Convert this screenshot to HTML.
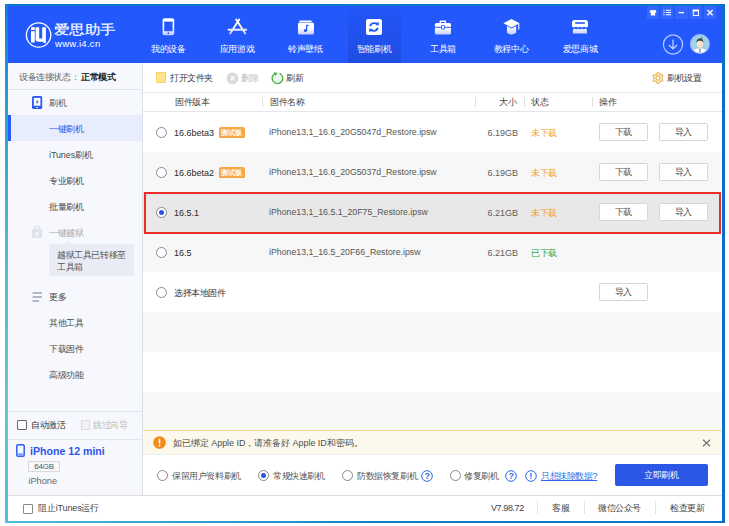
<!DOCTYPE html>
<html><head><meta charset="utf-8">
<style>
*{margin:0;padding:0;box-sizing:border-box}
html,body{width:729px;height:526px;background:#fff;overflow:hidden;font-family:"Liberation Sans",sans-serif;font-size:9px;color:#3a3a3a;letter-spacing:-0.4px}
.a{position:absolute}
.t{position:absolute;white-space:nowrap;line-height:12px;height:12px}
#frame{left:5px;top:4px;width:720px;height:519px}
#hdr{left:8px;top:6px;width:714px;height:57px;background:#2358fd}
.nav{position:absolute;top:43px;height:12px;line-height:12px;color:#fff;font-size:9px;white-space:nowrap;transform:translateX(-50%)}
.wb{position:absolute;top:6.2px;width:12.5px;height:12.5px;background:#3465ff}
#side{left:8px;top:63px;width:134px;height:432px;background:#f6f8fd}
.sline{position:absolute;height:1px;background:#e1e4ea}
.si{position:absolute;left:49px;line-height:12px;height:12px;white-space:nowrap;color:#4a4a4a}
.row{position:absolute;left:143px;width:578px;height:40px}
.radio{position:absolute;left:156px;width:11px;height:11px;border:1px solid #8a8a8a;border-radius:50%;background:#fff}
.ver{position:absolute;left:174px;line-height:12px;height:12px;color:#2a2a2a;font-size:9px;letter-spacing:0}
.fn{position:absolute;left:268.5px;line-height:12px;height:12px;color:#555;white-space:nowrap;font-size:9.7px;letter-spacing:0;transform:scaleX(0.905);transform-origin:0 0}
.sz{position:absolute;left:470px;width:48px;text-align:right;line-height:12px;height:12px;color:#5e5e5e;letter-spacing:0}
.st{position:absolute;left:531px;line-height:12px;height:12px;color:#f0a11a}
.btn{position:absolute;height:18px;width:48.5px;border:1px solid #d6d6d6;border-radius:1.5px;background:#fff;text-align:center;line-height:16px;color:#505050}
.badge{position:absolute;height:10.7px;width:26.5px;background:#f5a945;color:#fff;font-size:7px;line-height:12.4px;letter-spacing:0;font-weight:700;overflow:hidden;text-align:center;border-radius:1.5px}
.th{position:absolute;top:96px;line-height:12px;height:12px;color:#444}
.vd{position:absolute;top:97px;width:1px;height:10px;background:#e0e0e0}
</style></head><body>
<!-- frame border -->
<div class="a" style="left:5px;top:4px;width:720px;height:2px;background:#0b77c9"></div>
<div class="a" style="left:5px;top:4px;width:3px;height:519px;background:linear-gradient(#0f7fcc,#1a88d0 6%,#2aa0d0 20%,#5ab5d5 47%,#6cc3d8 77%,#50bedc 100%)"></div>
<div class="a" style="left:722px;top:4px;width:3px;height:519px;background:#0a6fcc"></div>
<div class="a" style="left:5px;top:521px;width:720px;height:2px;background:linear-gradient(90deg,#50bedc,#38acd6 15%,#1d94cc 40%,#0a80c2 52%,#0a72cc)"></div>

<!-- header -->
<div id="hdr" class="a"></div>
<div class="a" style="left:348px;top:6px;width:53px;height:57px;background:linear-gradient(#2356f8,#1f4de2)"></div>
<!-- logo -->
<svg class="a" style="left:0;top:0" width="729" height="70" viewBox="0 0 729 70">
 <defs>
  <linearGradient id="g" x1="0" y1="0" x2="0" y2="1"><stop offset="0" stop-color="#fff"/><stop offset=".45" stop-color="#fff"/><stop offset="1" stop-color="#c5cdf8"/></linearGradient>
  <linearGradient id="gs" gradientUnits="userSpaceOnUse" x1="0" y1="19" x2="0" y2="35"><stop offset="0" stop-color="#fff"/><stop offset=".45" stop-color="#fff"/><stop offset="1" stop-color="#c5cdf8"/></linearGradient>
 </defs>
 <circle cx="38.6" cy="35" r="12.2" fill="none" stroke="#fff" stroke-width="1.3"/>
 <path d="M31 27.2 H34.8 V30 H31 Z" fill="#fff"/>
 <path d="M31 31.2 H34.8 V42.5 H31 Z" fill="#fff"/>
 <path d="M35.6 27.2 H39.2 V38.5 H42.2 V27.2 H45.9 V43 H43.5 V41.8 H38.4 C36.6 41.8 35.6 40.6 35.6 39 Z" fill="#fff"/>
 <!-- phone -->
 <rect x="162.6" y="18.3" width="11.6" height="17" rx="2" fill="url(#g)"/>
 <rect x="164.2" y="21.6" width="8.4" height="9.6" fill="#2358fd"/>
 <circle cx="168.4" cy="33.2" r="0.9" fill="#2358fd"/>
 <!-- app store -->
 <path d="M239.2 19.6 L230.2 33.6 M236.2 19.6 L245.2 33.6 M228.6 29.8 H246.2" stroke="url(#gs)" stroke-width="1.9" fill="none" stroke-linecap="round"/>
 <!-- music -->
 <rect x="299.2" y="20.4" width="12.6" height="1.6" rx=".8" fill="#fff"/>
 <rect x="298" y="22.6" width="16" height="12" rx="1.6" fill="url(#g)"/>
 <path d="M306.6 25 V30.6 M306.6 25 L308.6 25.8" stroke="#2358fd" stroke-width="1.2" fill="none"/>
 <circle cx="305.4" cy="30.6" r="1.5" fill="#2358fd"/>
 <!-- tools -->
 <path d="M440.3 23.5 V21.2 H445.3 V23.5" stroke="#fff" stroke-width="1.4" fill="none"/>
 <rect x="434.9" y="23" width="16.1" height="11.6" rx="1.6" fill="url(#g)"/>
 <rect x="434.9" y="26.8" width="16.1" height="1" fill="#2358fd"/>
 <rect x="441.6" y="25.6" width="2.8" height="3.4" fill="#fff" stroke="#2358fd" stroke-width="0.8"/>
 <!-- cap -->
 <path d="M511.5 18.9 L519.6 23.2 L511.5 27.6 L503.4 23.2 Z" fill="#fff"/>
 <path d="M507 26 V32.6 C508.5 35 514.5 35 516.2 32.6 V26 L511.5 28.6 Z" fill="url(#gs)"/>
 <path d="M518.8 23.6 V29.6" stroke="#fff" stroke-width="1.1"/>
 <!-- shop -->
 <path d="M574.5 19.9 H585.5 C587 19.9 588 21 588 22.5 V26.2 C587 27.8 585.2 27.8 584 26.6 C583 27.8 581 27.8 580 26.6 C579 27.8 577 27.8 576 26.6 C574.8 27.8 573 27.8 572 26.2 V22.5 C572 21 573 19.9 574.5 19.9 Z" fill="#fff"/>
 <rect x="575.2" y="22.2" width="9.6" height="1.6" fill="#2358fd"/>
 <path d="M572.9 29.3 C574 28.4 575.6 28.4 576.5 29.3 C577.5 28.4 579 28.4 580 29.3 C581 28.4 582.5 28.4 583.5 29.3 C584.5 28.4 586 28.4 586.9 29.3 V33.4 H572.9 Z" fill="url(#gs)"/>
</svg>
<div class="t" style="left:54px;top:21.5px;font-size:15.5px;line-height:16px;height:16px;color:#fff;font-weight:400;-webkit-text-stroke:0.2px #fff;letter-spacing:-0.6px;transform:scaleY(0.84);transform-origin:0 50%">爱思助手</div>
<div class="t" style="left:55px;top:38px;font-size:9.5px;line-height:11px;height:11px;color:#fff;letter-spacing:0.3px">www.i4.cn</div>

<!-- nav active bg -->


<!-- nav icons -->
<svg class="a" style="left:366px;top:19px" width="16" height="16" viewBox="0 0 16 16"><rect x="0" y="0" width="16" height="16" rx="2" fill="#fff"/><path d="M4.2 7.2 A4 4 0 0 1 11.5 6 M11.8 8.8 A4 4 0 0 1 4.5 10" stroke="#2358fd" stroke-width="1.8" fill="none"/><path d="M9.6 4 L12.6 6.9 L12.9 3.2 Z M6.4 12 L3.4 9.1 L3.1 12.8 Z" fill="#2358fd"/></svg>
<div class="nav" style="left:168.5px">我的设备</div>
<div class="nav" style="left:237px">应用游戏</div>
<div class="nav" style="left:305.5px">铃声壁纸</div>
<div class="nav" style="left:374px">智能刷机</div>
<div class="nav" style="left:443px">工具箱</div>
<div class="nav" style="left:511px">教程中心</div>
<div class="nav" style="left:580px">爱思商城</div>

<!-- window buttons -->
<div class="wb" style="left:646.5px"></div>
<div class="wb" style="left:660.8px"></div>
<div class="wb" style="left:675.1px"></div>
<div class="wb" style="left:689.4px"></div>
<div class="wb" style="left:703.7px"></div>
<svg class="a" style="left:0;top:0" width="729" height="24" viewBox="0 0 729 24">
 <path d="M650 10.6 L652 9.8 C652.4 10.6 653.6 10.6 654 9.8 L656 10.6 L656.3 12.4 L655.2 12.6 V15.4 H650.8 V12.6 L649.7 12.4 Z" fill="#fff"/>
 <path d="M663.4 10.2 H664.6 M663.4 12.5 H664.6 M663.4 14.8 H664.6 M665.8 10.2 H671 M665.8 12.5 H671 M665.8 14.8 H671" stroke="#fff" stroke-width="1.1"/>
 <path d="M678.6 12.6 H684" stroke="#fff" stroke-width="1.3"/>
 <rect x="693.3" y="10.2" width="5.2" height="5.2" fill="none" stroke="#fff" stroke-width="1"/><rect x="692.8" y="9.7" width="6.2" height="1.8" fill="#fff"/>
 <path d="M707.4 10 L712.6 15.2 M712.6 10 L707.4 15.2" stroke="#fff" stroke-width="1.4"/>
</svg>
<!-- download circle -->
<svg class="a" style="left:662px;top:34px" width="22" height="22" viewBox="0 0 22 22"><circle cx="11" cy="10.5" r="9.6" fill="none" stroke="#b9c8ff" stroke-width="1.2"/><path d="M11 5.5 V15 M7 11 L11 15 L15 11" stroke="#c9d6ff" stroke-width="1.2" fill="none"/></svg>
<!-- avatar -->
<svg class="a" style="left:0;top:0" width="729" height="63" viewBox="0 0 729 63">
 <defs><clipPath id="av"><circle cx="699.9" cy="44" r="8.8"/></clipPath></defs>
 <circle cx="699.9" cy="44" r="10" fill="#aab8ff"/>
 <circle cx="699.9" cy="44" r="8.8" fill="#9fd3e6"/>
 <g clip-path="url(#av)">
  <path d="M692 54 C692.5 49.5 695.5 48.5 699.9 48.5 C704.3 48.5 707.3 49.5 707.8 54 Z" fill="#fff"/>
  <path d="M699 48.6 H700.8 L700.4 53 H699.4 Z" fill="#5a9ad8"/>
  <rect x="698.6" y="46.5" width="2.6" height="2.4" fill="#f5d3b8"/>
  <ellipse cx="699.9" cy="43.8" rx="3.1" ry="3.5" fill="#fde2cc"/>
  <path d="M696.6 43 C696.3 39.5 698 38.4 700 38.4 C702 38.4 703.5 39.3 703.3 43 C702.8 41.2 701.5 40.8 699.9 40.8 C698.3 40.8 697.1 41.3 696.6 43 Z" fill="#3a4658"/>
  <path d="M700.5 38.6 C701.5 37.2 702.6 37.4 703 37.8 C702.2 38 701.6 38.6 701.4 39.3 Z" fill="#3a4658"/>
 </g>
</svg>
<!-- sidebar -->
<div id="side" class="a"></div>
<div class="a" style="left:142px;top:63px;width:1px;height:432px;background:#dcdfe6"></div>
<div class="t" style="left:19px;top:71px;color:#666">设备连接状态：</div>
<div class="t" style="left:81px;top:71px;color:#222;font-weight:700">正常模式</div>
<div class="sline" style="left:8px;top:89px;width:134px"></div>
<svg class="a" style="left:32px;top:96px" width="11" height="14" viewBox="0 0 11 14"><rect x="0" y="0" width="10.2" height="13" rx="1.6" fill="#2f5bf0"/><rect x="1.8" y="1.9" width="6.6" height="7.8" fill="#fff"/><path d="M5.9 3.2 L3.6 6.5 H5.2 L4.4 8.8 L6.8 5.4 H5.2 Z" fill="#2f5bf0"/><rect x="4.3" y="11" width="1.6" height="0.9" fill="#fff"/></svg>
<div class="si" style="top:97px;color:#555">刷机</div>
<div class="a" style="left:8px;top:115px;width:134px;height:26px;background:#e7edfd"></div>
<div class="a" style="left:8px;top:115px;width:3px;height:26px;background:#2a5bff"></div>
<div class="si" style="top:123px;color:#2a55e8">一键刷机</div>
<div class="si" style="top:149px;letter-spacing:-0.1px">iTunes刷机</div>
<div class="si" style="top:175px">专业刷机</div>
<div class="si" style="top:201px">批量刷机</div>
<svg class="a" style="left:32px;top:225px" width="11" height="14" viewBox="0 0 11 14"><path d="M2.6 4.5 V3.6 A2.5 2.5 0 0 1 7.6 3.6 V4.5" stroke="#e0e3ec" stroke-width="1.3" fill="none"/><rect x="0" y="3.9" width="10.1" height="9.2" rx="1" fill="#e0e3ec"/><path d="M5.05 6.6 L6.8 8.6 H5.8 V10.6 H4.3 V8.6 H3.3 Z" fill="#fff"/></svg>
<div class="si" style="top:227px;color:#aaa">一键越狱</div>
<div class="a" style="left:49px;top:244px;width:85px;height:32px;background:#e9ecf5;border-radius:2px"></div>
<svg class="a" style="left:62.5px;top:240px" width="10" height="5" viewBox="0 0 10 5"><path d="M1 5 L5 1 L9 5Z" fill="#e9ecf5"/></svg>
<div class="t" style="left:57px;top:249px;color:#555">越狱工具已转移至</div>
<div class="t" style="left:57px;top:261px;color:#555">工具箱</div>
<svg class="a" style="left:32px;top:291px" width="11" height="12" viewBox="0 0 11 12"><path d="M0.5 2 H10 M0.5 6 H10 M0.5 10 H7" stroke="#9aa3b8" stroke-width="1.5"/></svg>
<div class="si" style="top:291px">更多</div>
<div class="si" style="top:317px">其他工具</div>
<div class="si" style="top:343px">下载固件</div>
<div class="si" style="top:369px">高级功能</div>
<div class="sline" style="left:8px;top:411px;width:134px"></div>
<div class="a" style="left:17px;top:420px;width:10px;height:10px;border:1px solid #666;border-radius:1px;background:#fff"></div>
<div class="t" style="left:31px;top:419px;color:#333">自动激活</div>
<div class="a" style="left:81px;top:420px;width:9px;height:10px;border:1px solid #ddd;border-radius:1px;background:#f2f3f6"></div>
<div class="t" style="left:93px;top:419px;color:#bbb">跳过向导</div>
<div class="sline" style="left:8px;top:438.5px;width:134px"></div>
<svg class="a" style="left:16px;top:444px" width="9" height="13" viewBox="0 0 9 13"><rect x="0.8" y="0.8" width="7.4" height="11.4" rx="1.3" fill="none" stroke="#2f5bf0" stroke-width="1.5"/><rect x="2" y="9.6" width="5" height="1" fill="#2f5bf0"/></svg>
<div class="t" style="left:30px;top:444px;color:#2f55e6;font-weight:700;font-size:10.6px;line-height:14px;height:14px;letter-spacing:0">iPhone 12 mini</div>
<div class="a" style="left:28.4px;top:461px;width:31.5px;height:11px;border:1px solid #dadada;background:#f9f9f9;font-size:8px;line-height:9px;text-align:center;color:#555;letter-spacing:-0.2px">64GB</div>
<div class="t" style="left:28.4px;top:475px;color:#666;font-size:9.2px;letter-spacing:0">iPhone</div>

<!-- main -->
<div class="a" style="left:143px;top:63px;width:579px;height:432px;background:#fff"></div>
<div class="a" style="left:156px;top:72px;width:10px;height:11px;background:#fde38a;border:1px solid #f5d46a"></div>
<div class="t" style="left:170px;top:72px">打开文件夹</div>
<svg class="a" style="left:225.5px;top:71.5px" width="13" height="13" viewBox="0 0 13 13"><circle cx="6.5" cy="6.3" r="5.9" fill="#d9d9d9"/><path d="M4.4 4.2 L8.6 8.4 M8.6 4.2 L4.4 8.4" stroke="#fff" stroke-width="1.1"/></svg>
<div class="t" style="left:241px;top:72px;color:#bbb">删除</div>
<svg class="a" style="left:270.5px;top:71.5px" width="13" height="13" viewBox="0 0 13 13"><circle cx="6.6" cy="6.3" r="5.3" fill="#ebf7ea"/><path d="M5.2 1.1 A5.3 5.3 0 1 0 8.6 1.4" stroke="#45ae45" stroke-width="1.3" fill="none"/><path d="M2.8 0.2 L6.6 0.9 L4.2 3.8 Z" fill="#45ae45"/></svg>
<div class="t" style="left:286px;top:72px">刷新</div>
<svg class="a" style="left:652px;top:71.6px" width="12" height="12" viewBox="0 0 12 12"><path d="M6.00 0.65 L6.46 0.77 L6.86 1.10 L7.19 1.56 L7.45 2.03 L7.67 2.42 L7.92 2.67 L8.27 2.76 L8.72 2.76 L9.25 2.75 L9.81 2.80 L10.30 2.99 L10.63 3.32 L10.76 3.78 L10.67 4.30 L10.44 4.81 L10.16 5.27 L9.94 5.66 L9.85 6.00 L9.94 6.34 L10.16 6.73 L10.44 7.19 L10.67 7.70 L10.76 8.22 L10.63 8.67 L10.30 9.01 L9.81 9.20 L9.25 9.25 L8.72 9.24 L8.27 9.24 L7.93 9.33 L7.67 9.58 L7.45 9.97 L7.19 10.44 L6.86 10.90 L6.46 11.23 L6.00 11.35 L5.54 11.23 L5.14 10.90 L4.81 10.44 L4.55 9.97 L4.33 9.58 L4.07 9.33 L3.73 9.24 L3.28 9.24 L2.75 9.25 L2.19 9.20 L1.70 9.01 L1.37 8.68 L1.24 8.22 L1.33 7.70 L1.56 7.19 L1.84 6.73 L2.06 6.34 L2.15 6.00 L2.06 5.66 L1.84 5.27 L1.56 4.81 L1.33 4.30 L1.24 3.78 L1.37 3.33 L1.70 2.99 L2.19 2.80 L2.75 2.75 L3.28 2.76 L3.73 2.76 L4.08 2.67 L4.33 2.42 L4.55 2.03 L4.81 1.56 L5.14 1.10 L5.54 0.77Z" fill="none" stroke="#eab54a" stroke-width="1.25"/><circle cx="6" cy="6" r="2.1" fill="none" stroke="#eab54a" stroke-width="1.1"/></svg>
<div class="t" style="left:667px;top:72px">刷机设置</div>
<div class="a" style="left:143px;top:92px;width:579px;height:1px;background:#e6e6e6"></div>

<div class="th" style="left:175px">固件版本</div>
<div class="vd" style="left:262px"></div>
<div class="th" style="left:270px">固件名称</div>
<div class="vd" style="left:475px"></div>
<div class="th" style="left:499px">大小</div>
<div class="vd" style="left:524px"></div>
<div class="th" style="left:531px">状态</div>
<div class="vd" style="left:592px"></div>
<div class="th" style="left:599px">操作</div>
<div class="a" style="left:143px;top:111px;width:579px;height:1px;background:#e6e6e6"></div>

<!-- rows -->
<div class="row" style="top:112px;background:#fff"></div>
<div class="row" style="top:152px;background:#f7f7f7"></div>
<div class="row" style="top:192px;background:#e8e8e8"></div>
<div class="row" style="top:232px;background:#f7f7f7"></div>
<div class="row" style="top:272px;background:#fff"></div>
<div class="row" style="top:312px;background:#f7f7f7"></div>
<div class="row" style="top:352px;background:#fff"></div>
<div class="row" style="top:392px;background:#f7f7f7;height:38px"></div>

<!-- row 1 -->
<div class="radio" style="top:126.5px"></div>
<div class="ver" style="top:127px">16.6beta3</div>
<div class="badge" style="left:218.5px;top:127px">测试版</div>
<div class="fn" style="top:126px">iPhone13,1_16.6_20G5047d_Restore.ipsw</div>
<div class="sz" style="top:127px">6.19GB</div>
<div class="st" style="top:127px">未下载</div>
<div class="btn" style="left:599px;top:123px">下载</div>
<div class="btn" style="left:659px;top:123px">导入</div>
<!-- row 2 -->
<div class="radio" style="top:166.5px"></div>
<div class="ver" style="top:167px">16.6beta2</div>
<div class="badge" style="left:218.5px;top:167px">测试版</div>
<div class="fn" style="top:166px">iPhone13,1_16.6_20G5037d_Restore.ipsw</div>
<div class="sz" style="top:167px">6.19GB</div>
<div class="st" style="top:167px">未下载</div>
<div class="btn" style="left:599px;top:163px">下载</div>
<div class="btn" style="left:659px;top:163px">导入</div>
<!-- row 3 -->
<div class="radio" style="top:206.5px;border-color:#888"></div>
<div class="a" style="left:159px;top:209.5px;width:5px;height:5px;border-radius:50%;background:#2a55e8"></div>
<div class="ver" style="top:207px">16.5.1</div>
<div class="fn" style="top:206px">iPhone13,1_16.5.1_20F75_Restore.ipsw</div>
<div class="sz" style="top:207px">6.21GB</div>
<div class="st" style="top:207px">未下载</div>
<div class="btn" style="left:599px;top:203px">下载</div>
<div class="btn" style="left:659px;top:203px">导入</div>
<!-- row 4 -->
<div class="radio" style="top:246.5px"></div>
<div class="ver" style="top:247px">16.5</div>
<div class="fn" style="top:246px">iPhone13,1_16.5_20F66_Restore.ipsw</div>
<div class="sz" style="top:247px">6.21GB</div>
<div class="st" style="top:247px;color:#2fa63a">已下载</div>
<!-- row 5 -->
<div class="radio" style="top:286.5px"></div>
<div class="t" style="left:174px;top:287px">选择本地固件</div>
<div class="btn" style="left:599px;top:282.5px">导入</div>

<!-- red box -->
<div class="a" style="left:144px;top:192px;width:577px;height:42px;border:2px solid #ee2b2b"></div>

<!-- notice -->
<div class="a" style="left:143px;top:430px;width:579px;height:24px;background:#fcf8ec;border-top:1px solid #f7dc8c"></div>
<svg class="a" style="left:153px;top:436px" width="13" height="13" viewBox="0 0 13 13"><circle cx="6.5" cy="6.5" r="6.3" fill="#f38a1a"/><rect x="5.7" y="2.8" width="1.6" height="5" rx=".6" fill="#fff"/><circle cx="6.5" cy="9.6" r="0.9" fill="#fff"/></svg>
<div class="t" style="left:173px;top:437px;font-size:9px;letter-spacing:-0.05px;color:#505050">如已绑定 Apple ID，请准备好 Apple ID和密码。</div>
<svg class="a" style="left:702px;top:439px" width="9" height="8" viewBox="0 0 9 8"><path d="M1 0.8 L8 7.2 M8 0.8 L1 7.2" stroke="#777" stroke-width="1.4"/></svg>
<div class="a" style="left:143px;top:454px;width:579px;height:1px;background:#eee"></div>

<!-- options -->
<div class="radio" style="left:157px;top:470px"></div>
<div class="t" style="left:172px;top:470px;color:#555">保留用户资料刷机</div>
<div class="radio" style="left:258px;top:470px"></div>
<div class="a" style="left:261px;top:473px;width:5px;height:5px;border-radius:50%;background:#2a55e8"></div>
<div class="t" style="left:273px;top:470px;color:#555">常规快速刷机</div>
<div class="radio" style="left:342px;top:470px"></div>
<div class="t" style="left:357px;top:470px;color:#555">防数据恢复刷机</div>
<svg class="a" style="left:421px;top:470px" width="12" height="12" viewBox="0 0 12 12"><circle cx="6" cy="6" r="5.3" fill="none" stroke="#2a6ae8" stroke-width="1"/><text x="6" y="9.2" font-size="9" font-weight="700" text-anchor="middle" fill="#3574e2" font-family="Liberation Sans">?</text></svg>
<div class="radio" style="left:450px;top:470px"></div>
<div class="t" style="left:464px;top:470px;color:#555">修复刷机</div>
<svg class="a" style="left:505px;top:470px" width="12" height="12" viewBox="0 0 12 12"><circle cx="6" cy="6" r="5.3" fill="none" stroke="#2a6ae8" stroke-width="1"/><text x="6" y="9.2" font-size="9" font-weight="700" text-anchor="middle" fill="#3574e2" font-family="Liberation Sans">?</text></svg>
<svg class="a" style="left:525px;top:470px" width="12" height="12" viewBox="0 0 12 12"><circle cx="6" cy="6" r="5.3" fill="none" stroke="#2a6ae8" stroke-width="1"/><rect x="5.4" y="2.8" width="1.2" height="4.2" fill="#2a6ae8"/><rect x="5.4" y="8" width="1.2" height="1.2" fill="#2a6ae8"/></svg>
<div class="t" style="left:541px;top:470px;color:#2a6ae8;text-decoration:underline">只想抹除数据?</div>
<div class="a" style="left:615px;top:464px;width:93px;height:22px;background:#2b56e6;border-radius:2px;color:#fff;text-align:center;line-height:22px">立即刷机</div>

<!-- status bar -->
<div class="a" style="left:8px;top:495px;width:714px;height:1px;background:#dedede"></div>
<div class="a" style="left:8px;top:496px;width:714px;height:25px;background:#fff"></div>
<div class="a" style="left:23px;top:504px;width:10px;height:10px;border:1px solid #8a8a8a;border-radius:1px;background:#fff"></div>
<div class="t" style="left:38px;top:502px;color:#444;letter-spacing:-0.15px">阻止iTunes运行</div>
<div class="t" style="left:491px;top:502px;color:#444">V7.98.72</div>
<div class="a" style="left:537px;top:501px;width:1px;height:13px;background:#e4e4e4"></div>
<div class="t" style="left:552px;top:502px;color:#444">客服</div>
<div class="a" style="left:584px;top:501px;width:1px;height:13px;background:#e4e4e4"></div>
<div class="t" style="left:598px;top:502px;color:#444">微信公众号</div>
<div class="a" style="left:655px;top:501px;width:1px;height:13px;background:#e4e4e4"></div>
<div class="t" style="left:670px;top:502px;color:#444">检查更新</div>
</body></html>
